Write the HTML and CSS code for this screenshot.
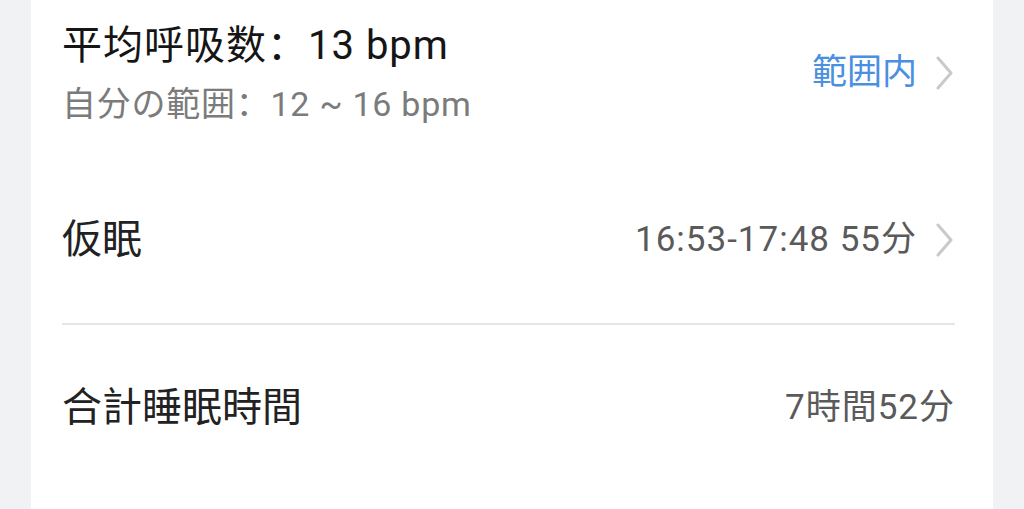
FILE: index.html
```html
<!DOCTYPE html>
<html lang="ja">

<head>
	<meta charset="UTF-8">
	<meta name="viewport" content="width=device-width, initial-scale=1.0">
	<title>睡眠</title>
	<link rel="stylesheet" href="styles.css">
</head>

<body>
	<div class="card">
		<div class="row row-breath">
			<div class="info">
				<div class="title">平均呼吸数：13 bpm</div>
				<div class="sub">自分の範囲：12 ~ 16 bpm</div>
			</div>
			<div class="value value-ok">範囲内</div>
			<svg class="chevron" width="20" height="34" viewBox="0 0 20 34">
				<path d="M3 2 L16 17 L3 32" fill="none" stroke="#c9c9c9" stroke-width="3" stroke-linecap="round" stroke-linejoin="round"/>
			</svg>
		</div>
		<div class="row row-nap">
			<div class="label">仮眠</div>
			<div class="value">16:53-17:48 55分</div>
			<svg class="chevron" width="20" height="34" viewBox="0 0 20 34">
				<path d="M3 2 L16 17 L3 32" fill="none" stroke="#c9c9c9" stroke-width="3" stroke-linecap="round" stroke-linejoin="round"/>
			</svg>
		</div>
		<div class="divider"></div>
		<div class="row row-total">
			<div class="label">合計睡眠時間</div>
			<div class="value">7時間52分</div>
		</div>
	</div>
</body>

</html>
```

FILE: styles.css
```css
body {
	margin: 0;
	background-color: #f1f2f4;
	font-family: Roboto, "Noto Sans CJK SC", sans-serif;
	font-feature-settings: "locl" 0;
	color: #222222;
	height: 509px;
	overflow: hidden;
}

.card {
	margin: 0 31px 0 31px;
	padding: 0 38px 0 31px;
	background-color: #ffffff;
	height: 509px;
}

.row {
	display: flex;
	align-items: center;
}

.row-breath {
	height: 146px;
	padding-bottom: 10px;
}

.row-nap {
	height: 167px;
}

.row-total {
	height: 166px;
}

.info {
	flex: 1;
	display: flex;
	flex-direction: column;
	gap: 15px;
}

.title {
	font-size: 40px;
	line-height: 46px;
	letter-spacing: 1px;
	color: #151515;
}

.sub {
	font-size: 34px;
	line-height: 40px;
	letter-spacing: 0.75px;
	color: #7b7b7b;
}

.label {
	flex: 1;
	font-size: 40px;
	line-height: 46px;
	color: #222222;
}

.value {
	font-size: 35px;
	line-height: 40px;
	letter-spacing: 1px;
	color: #5a5a5a;
}

.value-ok {
	color: #4a8fe2;
	letter-spacing: 0;
}

.chevron {
	margin-left: 18px;
	flex-shrink: 0;
}

.divider {
	height: 2px;
	background-color: #e6e6e6;
}
```
